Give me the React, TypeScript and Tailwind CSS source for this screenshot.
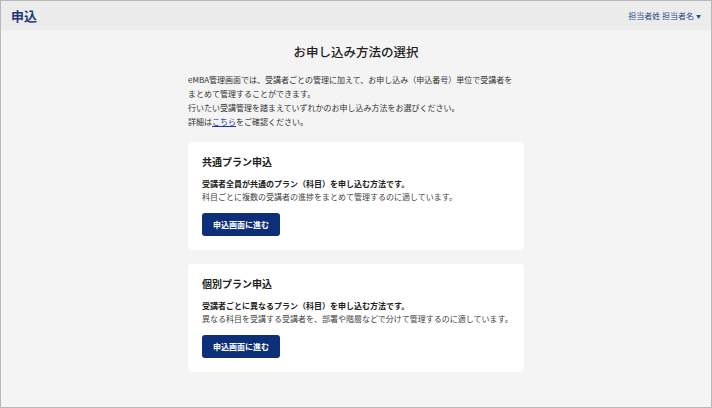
export default function App() {
  const f = { fontFamily: '"Noto Sans CJK JP","Noto Sans",sans-serif' };
  const Card = ({ title, bold, desc }: { title: string; bold: string; desc: string }) => (
    <div className="bg-white rounded-[4px] w-[336px] h-[108px] px-[14px] pt-[12px] whitespace-nowrap">
      <div className="text-[10px] font-bold text-[#222] leading-[16px]">{title}</div>
      <div className="mt-[7px] text-[8px] font-bold text-[#222] leading-[13px]">{bold}</div>
      <div className="text-[8px] text-[#444] leading-[13px]">{desc}</div>
      <button className="mt-[10px] bg-[#0d2f7a] text-white text-[8px] font-bold rounded-[3px] w-[78px] h-[23px]">申込画面に進む</button>
    </div>
  );
  return (
    <div style={f} className="w-[712px] h-[408px] bg-[#f4f4f4] border border-[#b8b8b8] flex flex-col">
      <div className="h-[29px] bg-[#ececec] flex items-center justify-between px-[10px] shrink-0">
        <span className="text-[13px] font-bold text-[#1f3a7a]">申込</span>
        <span className="text-[8px] text-[#2a4a8a] flex items-center gap-[2px]">担当者姓 担当者名<span className="text-[5px]">▼</span></span>
      </div>
      <div className="flex flex-col items-center">
        <div className="mt-[13px] text-[12.5px] font-medium text-[#222] leading-[18px]">お申し込み方法の選択</div>
        <div className="mt-[12px] w-[336px] text-[8px] text-[#333] leading-[14px] whitespace-nowrap">
          <div>eMBA管理画面では、受講者ごとの管理に加えて、お申し込み（申込番号）単位で受講者を</div>
          <div>まとめて管理することができます。</div>
          <div>行いたい受講管理を踏まえていずれかのお申し込み方法をお選びください。</div>
          <div>詳細は<span className="text-[#1f3a9a] underline">こちら</span>をご確認ください。</div>
        </div>
        <div className="mt-[13px] flex flex-col gap-[14px]">
          <Card title="共通プラン申込" bold="受講者全員が共通のプラン（科目）を申し込む方法です。" desc="科目ごとに複数の受講者の進捗をまとめて管理するのに適しています。" />
          <Card title="個別プラン申込" bold="受講者ごとに異なるプラン（科目）を申し込む方法です。" desc="異なる科目を受講する受講者を、部署や階層などで分けて管理するのに適しています。" />
        </div>
      </div>
    </div>
  );
}
